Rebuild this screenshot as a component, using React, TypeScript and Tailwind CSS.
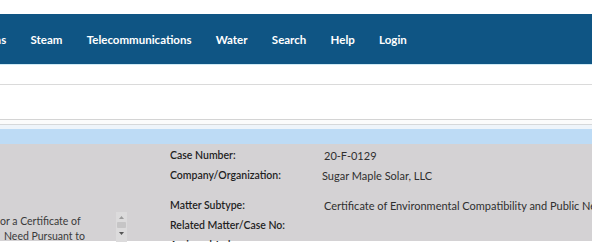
import React from "react";

const nav = ["Gas", "Steam", "Telecommunications", "Water", "Search", "Help", "Login"];

const rows = [
  { label: "Case Number:", value: "20-F-0129", h: "h-[20px]", vx: "pl-[2px]" },
  { label: "Company/Organization:", value: "Sugar Maple Solar, LLC", h: "h-[20px]", vx: "" },
  { label: "", value: "", h: "h-[10px]", vx: "" },
  { label: "Matter Subtype:", value: "Certificate of Environmental Compatibility and Public Need", h: "h-[20px]", vx: "pl-[2px]" },
  { label: "Related Matter/Case No:", value: "", h: "h-[20px]", vx: "" },
  { label: "Assigned Judge:", value: "", h: "h-[20px]", vx: "" },
];

export default function App() {
  return (
    <div className="w-[592px] h-[242px] overflow-hidden bg-white" style={{ fontFamily: "Lato, 'Open Sans', sans-serif" }}>
      <div className="h-[14px] bg-white" />
      <nav className="h-[51px] bg-[#0f5584] border-b border-[#cfeaf5] flex items-center">
        <div className="flex items-center gap-[24.3px] ml-[-13px] pt-[2px]">
          {nav.map((n) => (
            <span key={n} className="text-white font-bold text-[11.5px]">
              {n}
            </span>
          ))}
        </div>
      </nav>
      <div className="h-[19px] bg-white" />
      <div className="h-[35px] bg-white border-t border-[#dadada]" />
      <div className="h-[1px] bg-[#d4d4d4]" />
      <div className="h-[4px] bg-[#fbfbfb]" />
      <div className="h-[1px] bg-[#d6d8da]" />
      <div className="h-[4px] bg-[#eef4fa]" />
      <div className="h-[15px] bg-[#bddbf5]" />
      <div className="h-[97px] bg-[#d4d2d4] flex">
        <div className="w-[170px] shrink-0 relative">
          <div className="absolute left-0 top-[70px] w-[115px] text-[10.5px] leading-[15px] text-[#3a3a3a] whitespace-nowrap">
            <div>or a Certificate of</div>
            <div className="pl-[4px]">Need Pursuant to</div>
          </div>
          <div className="absolute left-[116px] top-[68px] w-[11px] h-[32px] bg-[#dcdbdc] flex flex-col items-center">
            <svg width="7" height="7" viewBox="0 0 7 7" className="mt-[2px]">
              <path d="M1 5 L3.5 2 L6 5 Z" fill="#9a9a9a" />
            </svg>
            <div className="w-[9px] h-[6px] bg-[#c6c5c6] rounded-[1px] mt-[1px]" />
            <svg width="7" height="7" viewBox="0 0 7 7" className="mt-[2px]">
              <path d="M1 2 L6 2 L3.5 5 Z" fill="#555" />
            </svg>
          </div>
        </div>
        <div className="flex-1 min-w-0 pt-[2px]">
          {rows.map((r, i) => (
            <div key={i} className={`flex items-center ${r.h}`}>
              <div className="w-[152px] shrink-0 text-[10.5px] font-semibold text-[#1f1f1f] whitespace-nowrap">{r.label}</div>
              <div className={`text-[11px] text-[#2f2f2f] whitespace-nowrap ${r.vx}`}>{r.value}</div>
            </div>
          ))}
        </div>
      </div>
    </div>
  );
}
